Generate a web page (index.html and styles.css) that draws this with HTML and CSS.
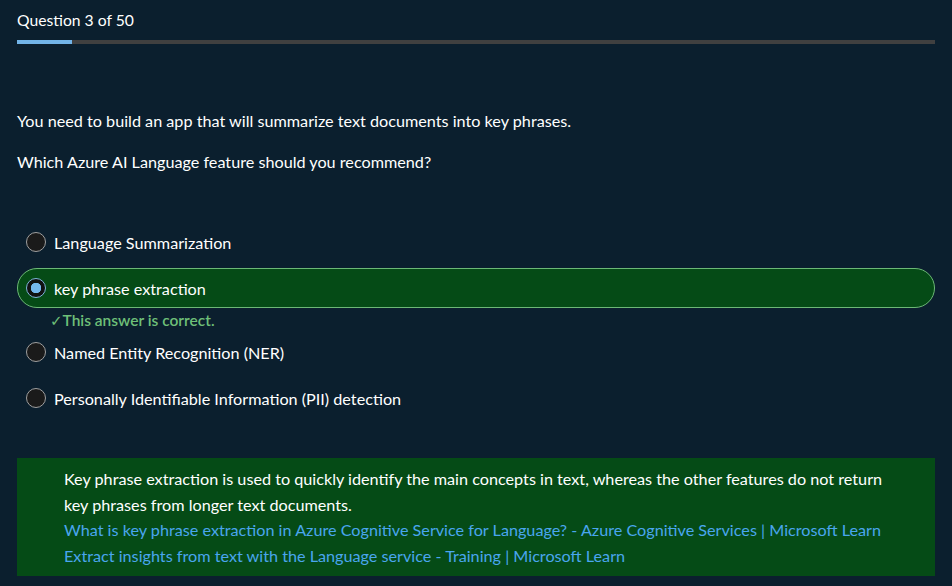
FILE: index.html
```html
<!DOCTYPE html>
<html>
<head>
<meta charset="utf-8">
<link rel="stylesheet" href="styles.css">
</head>
<body>
<div class="page">
  <div class="header">Question 3 of 50</div>
  <div class="progress"><div class="progress-fill" style="width: 6%"></div></div>
  <div class="question">
    <p>You need to build an app that will summarize text documents into key phrases.</p>
    <p>Which Azure AI Language feature should you recommend?</p>
  </div>
  <div class="options">
    <div class="option"><span class="radio"></span><span>Language Summarization</span></div>
    <div class="option selected"><span class="radio checked"></span><span>key phrase extraction</span></div>
    <div class="feedback"><span class="check">✓</span>This answer is correct.</div>
    <div class="option"><span class="radio"></span><span>Named Entity Recognition (NER)</span></div>
    <div class="option"><span class="radio"></span><span>Personally Identifiable Information (PII) detection</span></div>
  </div>
  <div class="explanation">
    <p>Key phrase extraction is used to quickly identify the main concepts in text, whereas the other features do not return key phrases from longer text documents.</p>
    <a href="#">What is key phrase extraction in Azure Cognitive Service for Language? - Azure Cognitive Services | Microsoft Learn</a>
    <a href="#">Extract insights from text with the Language service - Training | Microsoft Learn</a>
  </div>
</div>
</body>
</html>
```
FILE: styles.css
```css
html, body {
  margin: 0;
  padding: 0;
  background: #0b1f2e;
  height: 100%;
}
body {
  font-family: Lato, "Liberation Sans", sans-serif;
  font-size: 16.2px;
  color: #ffffff;
}
.page {
  padding: 8px 17px 0 17px;
  display: flex;
  flex-direction: column;
}
.header {
  height: 24px;
  line-height: 24px;
  font-size: 15.7px;
}
.progress {
  margin-top: 8px;
  height: 4px;
  background: #404040;
}
.progress-fill {
  height: 100%;
  background: #72b4e8;
}
.question {
  margin-top: 66px;
}
.question p {
  margin: 0 0 19px 0;
  line-height: 22px;
}
.options {
  margin-top: 30px;
  display: flex;
  flex-direction: column;
  gap: 6px;
}
.option {
  display: flex;
  align-items: center;
  gap: 8px;
  height: 40px;
  padding: 0 8px;
  border: 1px solid transparent;
  border-radius: 20px;
  box-sizing: border-box;
}
.option.selected {
  background: #054b16;
  border-color: #6cb876;
}
.radio {
  width: 20px;
  height: 20px;
  border-radius: 50%;
  box-sizing: border-box;
  border: 1px solid #a0a0a0;
  background: #1a1a1a;
  flex: none;
}
.radio.checked {
  border: 1px solid #7fb3d9;
  background: radial-gradient(circle, #74b8ec 0 5px, #111 5.5px);
}
.feedback {
  margin: -6px 0;
  height: 24px;
  line-height: 24px;
  padding-left: 33px;
  color: #6ebf78;
  font-weight: 600;
  font-size: 15.5px;
}
.check {
  font-weight: 400;
  font-family: "DejaVu Sans", sans-serif;
  font-size: 15px;
  margin-right: 0;
}
.explanation {
  margin-top: 40px;
  background: #054b16;
  padding: 8px 47px 7px 47px;
  line-height: 25.7px;
  display: flex;
  flex-direction: column;
}
.explanation p {
  margin: 0;
}
.explanation a {
  color: #4aa6ee;
  text-decoration: none;
}
```
